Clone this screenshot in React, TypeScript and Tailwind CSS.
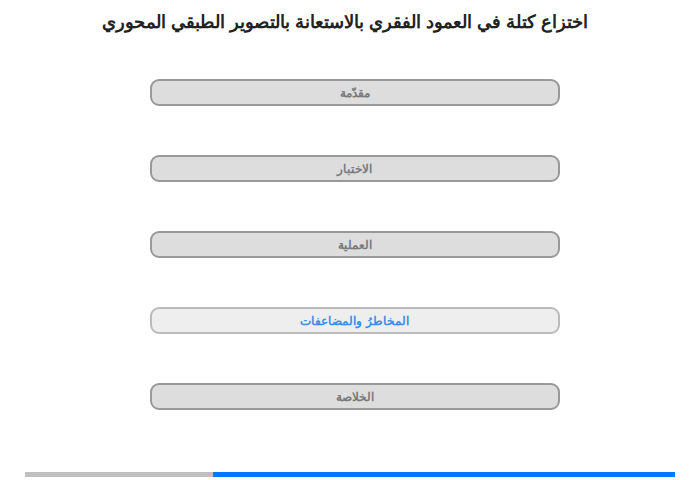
const items = [
  { label: "مقدّمة", active: false },
  { label: "الاختبار", active: false },
  { label: "العملية", active: false },
  { label: "المخاطرُ والمضاعفات", active: true },
  { label: "الخلاصة", active: false },
];

export default function App() {
  return (
    <div dir="rtl" className="w-[700px] h-[480px] bg-white flex flex-col font-['Liberation_Sans',Arial,sans-serif] overflow-hidden">
      <h1 className="text-center text-[18px] font-bold text-[#222] pt-[10px] pr-[10px] h-[38px] leading-[24px]">
        اختزاع كتلة في العمود الفقري بالاستعانة بالتصوير الطبقي المحوري
      </h1>
      <div className="flex flex-col items-center gap-[49px] pt-[41px] pl-[9px]">
        {items.map((it) => (
          <div
            key={it.label}
            className={
              it.active
                ? "w-[410px] h-[27px] rounded-[9px] border-2 border-[#bbb] bg-[#eee] text-[#3b8eea] text-[12px] font-bold flex items-center justify-center"
                : "w-[410px] h-[27px] rounded-[9px] border-2 border-[#999] bg-[#ddd] text-[#7a7a7a] text-[12px] font-bold flex items-center justify-center"
            }
          >
            {it.label}
          </div>
        ))}
      </div>
      <div className="flex-1" />
      <div dir="ltr" className="flex mx-[25px] mb-[3px] h-[5px]">
        <div className="w-[188px] bg-[#c0c0c0]" />
        <div className="flex-1 bg-[#007bff]" />
      </div>
    </div>
  );
}
